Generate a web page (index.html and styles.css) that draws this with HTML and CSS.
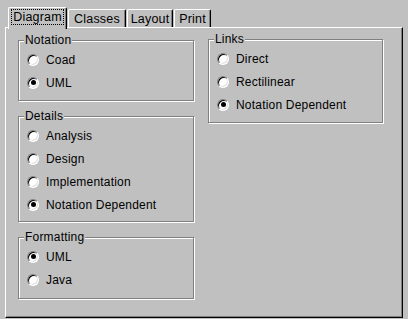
FILE: index.html
```html
<!DOCTYPE html>
<html>
<head>
<meta charset="utf-8">
<link rel="stylesheet" href="styles.css">
</head>
<body>
<div class="dialog">
  <div class="tabs">
    <div class="tab active t-diagram"><span class="focus">Diagram</span></div>
    <div class="tab t-classes">Classes</div>
    <div class="tab t-layout">Layout</div>
    <div class="tab t-print">Print</div>
  </div>
  <div class="panel">
    <div class="col col-left">
      <fieldset class="group g-notation">
        <legend>Notation</legend>
        <label class="opt"><span class="radio"></span>Coad</label>
        <label class="opt"><span class="radio on"></span>UML</label>
      </fieldset>
      <fieldset class="group g-details">
        <legend>Details</legend>
        <label class="opt"><span class="radio"></span>Analysis</label>
        <label class="opt"><span class="radio"></span>Design</label>
        <label class="opt"><span class="radio"></span>Implementation</label>
        <label class="opt"><span class="radio on"></span>Notation Dependent</label>
      </fieldset>
      <fieldset class="group g-format">
        <legend>Formatting</legend>
        <label class="opt"><span class="radio on"></span>UML</label>
        <label class="opt"><span class="radio"></span>Java</label>
      </fieldset>
    </div>
    <div class="col col-right">
      <fieldset class="group g-links">
        <legend>Links</legend>
        <label class="opt"><span class="radio"></span>Direct</label>
        <label class="opt"><span class="radio"></span>Rectilinear</label>
        <label class="opt"><span class="radio on"></span>Notation Dependent</label>
      </fieldset>
    </div>
  </div>
</div>
</body>
</html>
```
FILE: styles.css
```css
html, body {
  margin: 0;
  padding: 0;
}
body {
  background: #c0c0c0;
  color: #000;
  font: 12px/14px "Liberation Sans", Arial, sans-serif;
  letter-spacing: 0.2px;
  width: 408px;
  height: 319px;
  overflow: hidden;
}
.dialog {
  padding: 7px 0 0 5px;
}
.tabs {
  display: flex;
  align-items: flex-end;
  height: 20px;
  padding-left: 3px;
  position: relative;
  z-index: 1;
}
.tab {
  box-sizing: border-box;
  height: 18px;
  margin-right: 1px;
  border-top: 1px solid #fff;
  border-left: 1px solid #fff;
  border-right: 1px solid #000;
  border-radius: 2px 2px 0 0;
  box-shadow: inset -1px 0 0 #808080;
  background: #c0c0c0;
  display: flex;
  align-items: center;
  justify-content: center;
  line-height: 14px;
  font-size: 12.5px;
}
.t-diagram { width: 59px; }
.t-classes { width: 58px; }
.t-layout { width: 46px; }
.t-print { width: 37px; }
.tab.active {
  height: 22px;
  margin-bottom: -2px;
  padding-bottom: 3px;
}
.focus {
  outline: 1px dotted #000;
  outline-offset: 0;
  padding: 0 1px;
}
.panel {
  box-sizing: border-box;
  width: 398px;
  height: 291px;
  border: 1px solid;
  border-color: #fff #000 #000 #fff;
  box-shadow: inset -1px -1px 0 #808080;
  display: flex;
  gap: 14px;
  padding: 6px 0 0 12px;
}
.col {
  display: flex;
  flex-direction: column;
  gap: 9px;
}
.col-left {
  width: 176px;
}
.col-right {
  width: 175px;
  margin-top: -1px;
}
.group {
  margin: 0;
  padding: 2px 0 6px 5px;
  border: 1px solid #808080;
  box-shadow: inset 1px 1px 0 #fff, 1px 1px 0 #fff;
  min-width: 0;
}
.group legend {
  padding: 0 1px;
  line-height: 12px;
  background: #c0c0c0;
}
.g-details {
  padding-bottom: 5px;
}
.g-format {
  padding-bottom: 7px;
}
.opt {
  display: flex;
  align-items: center;
  height: 23px;
  padding-left: 3px;
}
.radio {
  box-sizing: border-box;
  flex: none;
  width: 12px;
  height: 12px;
  margin-right: 7px;
  border-radius: 50%;
  border: 1px solid;
  border-color: #808080 #fff #fff #808080;
  box-shadow: inset 1px 1px 0 #000, inset -1px -1px 0 #dfdfdf;
  background: #fff;
  display: flex;
  align-items: center;
  justify-content: center;
}
.radio.on::after {
  content: "";
  width: 5px;
  height: 5px;
  border-radius: 50%;
  background: #000;
}
```
